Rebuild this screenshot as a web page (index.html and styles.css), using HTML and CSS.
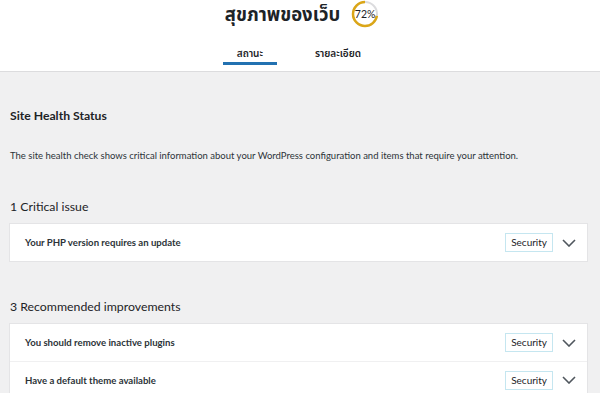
FILE: index.html
```html
<!DOCTYPE html>
<html lang="th">
<head>
  <meta charset="UTF-8">
  <meta name="viewport" content="width=device-width, initial-scale=1.0">
  <title>สุขภาพของเว็บ</title>
  <link rel="stylesheet" href="styles.css">
</head>
<body>
  <div class="health-header">
    <div class="title-row">
      <h1 class="page-title">สุขภาพของเว็บ</h1>
      <div class="progress">
        <svg width="28" height="28" viewBox="0 0 28 28">
          <circle cx="14" cy="14" r="12" fill="none" stroke="#dcdcde" stroke-width="2"></circle>
          <circle cx="14" cy="14" r="12" fill="none" stroke="#dba617" stroke-width="2.5"
            stroke-dasharray="54.3 75.4" transform="rotate(-90 14 14) scale(1 -1) translate(0 -28)"></circle>
        </svg>
        <span class="progress-count">72%</span>
      </div>
    </div>
    <nav class="tabs">
      <a class="tab active" href="#">สถานะ</a>
      <a class="tab" href="#">รายละเอียด</a>
    </nav>
  </div>

  <div class="health-body">
    <h2 class="status-title">Site Health Status</h2>
    <p class="status-desc">The site health check shows critical information about your WordPress configuration and items that require your attention.</p>

    <h3 class="issue-count">1 Critical issue</h3>
    <div class="issues">
      <div class="issue">
        <span class="issue-label">Your PHP version requires an update</span>
        <span class="badge">Security</span>
        <svg class="chevron" width="14" height="8" viewBox="0 0 14 8"><polyline points="1,1 7,7 13,1" fill="none" stroke="#50575e" stroke-width="1.6"></polyline></svg>
      </div>
    </div>

    <h3 class="issue-count second">3 Recommended improvements</h3>
    <div class="issues">
      <div class="issue">
        <span class="issue-label">You should remove inactive plugins</span>
        <span class="badge">Security</span>
        <svg class="chevron" width="14" height="8" viewBox="0 0 14 8"><polyline points="1,1 7,7 13,1" fill="none" stroke="#50575e" stroke-width="1.6"></polyline></svg>
      </div>
      <div class="issue">
        <span class="issue-label">Have a default theme available</span>
        <span class="badge">Security</span>
        <svg class="chevron" width="14" height="8" viewBox="0 0 14 8"><polyline points="1,1 7,7 13,1" fill="none" stroke="#50575e" stroke-width="1.6"></polyline></svg>
      </div>
    </div>
  </div>
</body>
</html>
```

FILE: styles.css
```css
body {
  margin: 0;
  padding: 0;
  font-family: Lato, "Noto Sans", "Noto Sans Thai", sans-serif;
  background-color: #f0f0f1;
  color: #1d2327;
  overflow: hidden;
}

.health-header {
  background-color: #fff;
  border-bottom: 1px solid #dcdcde;
  height: 71px;
  display: flex;
  flex-direction: column;
  align-items: center;
}

.title-row {
  display: flex;
  align-items: center;
  gap: 11px;
  height: 28px;
  margin-left: 4px;
}

.page-title {
  margin: 0;
  font-size: 18.5px;
  font-weight: 700;
  color: #1d2327;
  line-height: 28px;
}

.progress {
  position: relative;
  width: 28px;
  height: 28px;
}

.progress svg {
  display: block;
}

.progress-count {
  position: absolute;
  top: 0;
  left: 0;
  width: 28px;
  line-height: 28px;
  text-align: center;
  font-size: 10.5px;
  color: #1d2327;
}

.tabs {
  display: flex;
  gap: 28px;
  margin-top: 12px;
  margin-right: 6px;
}

.tab {
  display: block;
  padding: 6px 10px 0;
  height: 25px;
  box-sizing: border-box;
  min-width: 54px;
  text-align: center;
  font-size: 10px;
  font-weight: 600;
  color: #1d2327;
  text-decoration: none;
  border-bottom: 3px solid transparent;
  white-space: nowrap;
}

.tab.active {
  border-bottom-color: #2271b1;
}

.health-body {
  padding: 0 13px 0 10px;
}

.status-title {
  margin: 35px 0 0;
  font-size: 12.2px;
  font-weight: 700;
  line-height: 18px;
}

.status-desc {
  margin: 24px 0 0;
  font-size: 9.5px;
  line-height: 14px;
  white-space: nowrap;
  color: #2c3338;
}

.issue-count {
  margin: 35px 0 0;
  font-size: 12.3px;
  font-weight: 400;
  line-height: 18px;
}

.issue-count.second {
  margin-top: 37px;
}

.issues {
  margin-top: 8px;
  background-color: #fff;
  box-shadow: 0 0 0 1px #e4e4e6;
}

.issue {
  display: flex;
  align-items: center;
  height: 37px;
  padding: 0 11px 0 15px;
  border-top: 1px solid #f0f0f1;
  box-sizing: border-box;
}

.issue:first-child {
  border-top: none;
}

.issue-label {
  flex-grow: 1;
  font-size: 9.6px;
  font-weight: 700;
  color: #2c3338;
}

.badge {
  font-size: 10px;
  border: 1px solid #c5e6f0;
  padding: 2px 5px;
  line-height: 13px;
  color: #1d2327;
}

.chevron {
  display: block;
  margin-left: 9px;
}
```
